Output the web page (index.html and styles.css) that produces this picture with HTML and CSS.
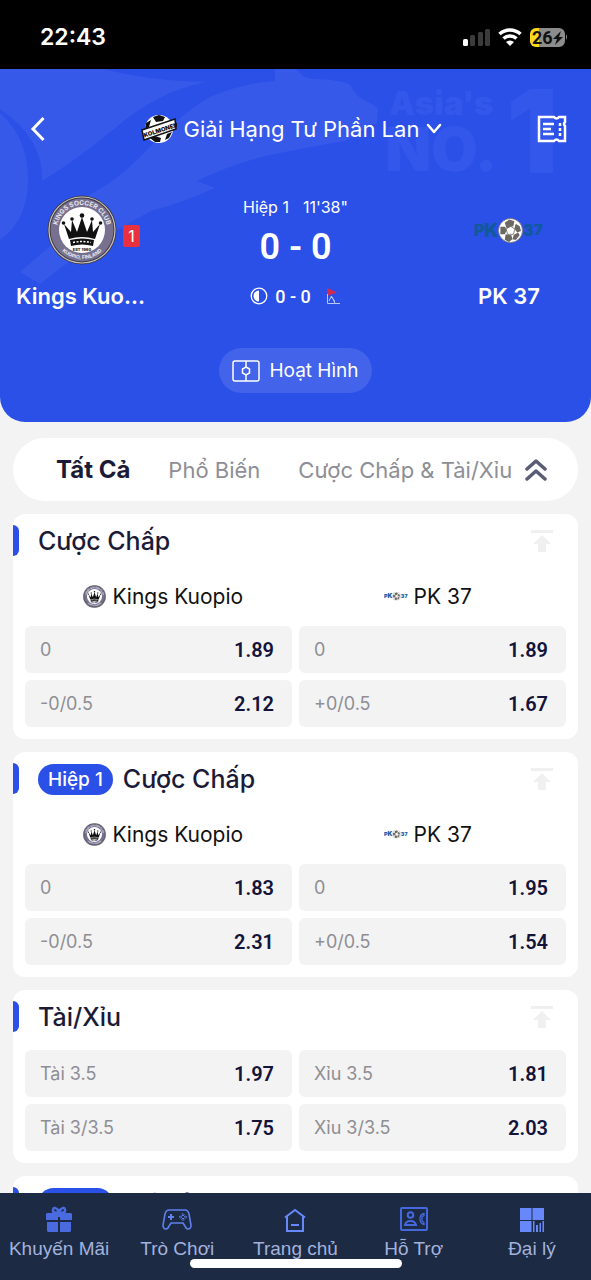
FILE: index.html
```html
<!DOCTYPE html>
<html lang="vi">
<head>
<meta charset="utf-8">
<meta name="viewport" content="width=device-width, initial-scale=1">
<title>Kings Kuopio - PK 37</title>
<link rel="stylesheet" href="styles.css">
</head>
<body>
<svg class="defs" aria-hidden="true">
  <defs>
    <path id="arc-top" d="M10 35a25 25 0 0 1 50 0"/>
    <path id="arc-bottom" d="M6 35a29 29 0 0 0 58 0"/>
    <symbol id="crest" viewBox="0 0 70 70">
      <circle cx="35" cy="35" r="34.500" fill="#3d3a4a"/>
      <circle cx="35" cy="35" r="33" fill="none" stroke="#c9c4b8" stroke-width="1.200"/>
      <circle cx="35" cy="35" r="31.500" fill="#77718f"/>
      <circle cx="35" cy="35" r="23" fill="#fff"/>
      <g fill="#e9e7f0" font-family="Inter, sans-serif" font-weight="700" text-anchor="middle">
        <text font-size="6.500"><textPath href="#arc-top" startOffset="50%">KINGS SOCCER CLUB</textPath></text>
        <text font-size="5"><textPath href="#arc-bottom" startOffset="50%">KUOPIO, FINLAND</textPath></text>
      </g>
      <path fill="#111" d="M22 44 17 29l7 8 1-12 5 12 5-15 5 15 5-12 1 12 7-8-5 15q-13-4-26 0zM23 45q12-3 24 0l-1 6q-11-3-22 0z"/>
      <g fill="#111"><circle cx="16.500" cy="28" r="1.800"/><circle cx="25" cy="24" r="1.800"/><circle cx="35" cy="20.500" r="2.300"/><circle cx="45" cy="24" r="1.800"/><circle cx="53.500" cy="28" r="1.800"/></g>
      <path d="M26 47.500q9-2 18 0" fill="none" stroke="#fff" stroke-width="1.500" stroke-dasharray="2 1.500"/>
      <text x="35" y="55.500" font-family="Inter, sans-serif" font-size="4" font-weight="800" text-anchor="middle" fill="#222">EST 1960</text>
    </symbol>
    <symbol id="ball" viewBox="0 0 26 26">
      <circle cx="13" cy="13" r="12.500" fill="#fff" stroke="#77715f" stroke-width=".8"/>
      <g fill="#6c6862"><path d="m13 8.500 4.500 3-1.500 5.500h-6l-1.500-5.500z" fill="#fff" stroke="#6c6862" stroke-width=".8"/><path d="m7 5 5-3.500 5 2-1 5-3 .500-4 2z"/><path d="m18.500 6 4 2.500 1.500 5-4 1.500-3-4z"/><path d="m16.500 17.500 4.500-2.500 1.500 3-4 5-3.500-1z"/><path d="m8 17 6 1 1 4-3.500 3-4.500-2.500z"/><path d="m2.500 9 5 0 1.500 4-2 4-4.500 0z"/></g>
    </symbol>
    <symbol id="pk" viewBox="0 0 70 26">
      <g font-family="Inter, sans-serif" font-weight="900" fill="currentColor"><text x="0" y="19" font-size="16">P</text><text x="10" y="20" font-size="19">K</text><text x="49" y="19" font-size="16">3</text><text x="60" y="18" font-size="15">7</text></g>
      <use href="#ball" x="24" y="1" width="25" height="25"/>
    </symbol>
    <symbol id="to-top" viewBox="0 0 24 22"><path fill="#f0f0f1" d="M1 0h22v3H1zM12 5l9 9h-5v8H8v-8H3z"/></symbol>
  </defs>
</svg>
<div class="app">
  <div class="status">
    <time>22:43</time>
    <svg width="106" height="22" viewBox="0 0 106 22" aria-label="Pin 26%">
      <rect x="0" y="13" width="5" height="7" rx="1.500" fill="#fff"/>
      <g fill="#3b3b3b"><rect x="7" y="9" width="5" height="11" rx="1.500"/><rect x="15" y="6" width="5" height="14" rx="1.500"/><rect x="22" y="3" width="5" height="17" rx="1.500"/></g>
      <g fill="none" stroke="#fff" stroke-width="3.500"><path d="M36.500 8a15.500 15.500 0 0 1 21 0"/><path d="M40.500 12.500a9.500 9.500 0 0 1 13 0"/></g>
      <path fill="#fff" d="m47 20-4-4a6 6 0 0 1 8 0z"/>
      <path fill="#fbd81a" d="M73 2h4v19h-4a6 6 0 0 1-6-6V8a6 6 0 0 1 6-6z"/>
      <path fill="#8c8c8c" d="M76 2h20a6 6 0 0 1 6 6v7a6 6 0 0 1-6 6H76zM103 8q2 3 0 6z"/>
      <text x="69" y="18" font-family="Roboto, sans-serif" font-weight="700" font-size="18" fill="#111">26</text>
      <path fill="#111" d="m98 5-8 8h4l-2 6 8-8h-4z"/>
    </svg>
  </div>

  <header class="hero">
    <svg class="watermark" viewBox="0 0 591 353" preserveAspectRatio="xMidYMin slice" aria-hidden="true">
      <g fill="#3659ea">
        <path d="M0 0h104q45 12 102 13-48 9-92 47Q78 90 42 112q2-42-42-72z"/>
        <path d="M0 44q28 25 28 66T0 171z"/>
        <path d="M275 0h22q4 9 17 10 32 1 37 7 4 10 15 15 9 5 12 7l-1 15q-14 6-32 18-42 7-75 14-38 9-73 26l18 7q-34 15-64 23-58 30-111 73l-20-12 35-30q-6-18 1-33 50-16 87-55 37-40 67-57 33-14 65-16z"/>
      </g>
      <g fill="#3357ea" font-family="Inter, sans-serif" font-weight="900"><text x="389" y="46" font-size="33">Asia's</text><text x="385" y="102" font-size="60">NO.</text><text x="506" y="104" font-size="116">1</text></g>
    </svg>
    <div class="topbar">
      <button class="plain back" aria-label="Quay lại"><svg width="16" height="26" viewBox="0 0 16 26"><path d="M13.500 2 3 13l10.500 11" fill="none" stroke="#fff" stroke-width="3"/></svg></button>
      <button class="plain league">
        <svg width="36" height="32" viewBox="0 0 36 32"><circle cx="18" cy="16" r="14" fill="#fff"/><path fill="#111" d="m12 4 6-2 6 2-2 4-7 1zM5 10l5-3-2 7-4 2zM29 8l3 6-3 1-2-4zM9 25l5-2 6 2-1 4h-5zM26 21l5-2-3 6-4 2z"/><path d="M1 17 34 6l1 10L3 27z" fill="#fff" stroke="#111" stroke-width="1.500"/><text x="3.500" y="24.500" font-family="Inter, sans-serif" font-size="6" font-weight="900" fill="#111" transform="rotate(-18 3.500 24.500)">KOLMONEN</text></svg>
        <span>Giải Hạng Tư Phần Lan</span>
        <svg width="16" height="12" viewBox="0 0 16 12"><path d="m2 2 6 7 6-7" fill="none" stroke="#fff" stroke-width="2.500" stroke-linecap="round" stroke-linejoin="round"/></svg>
      </button>
      <button class="plain ticket" aria-label="Phiếu cược"><svg width="30" height="28" viewBox="0 0 30 28"><path d="M2 2h15q2.500 3 5 0h6v5q-2 2 0 4v15h-6q-2.500-3-5 0H2z" fill="none" stroke="#fff" stroke-width="2.500"/><path d="M6 9h11M6 14h8M6 19h11M23 8v3M23 13v3M23 18v3" stroke="#fff" stroke-width="2.500"/></svg></button>
    </div>
    <div class="match">
      <div class="side">
        <div class="logo"><svg width="70" height="70"><use href="#crest"/></svg><span class="redcard">1</span></div>
        <div class="name">Kings Kuopio</div>
      </div>
      <div class="middle">
        <div class="clock"><span>Hiệp 1</span><span>11'38"</span></div>
        <div class="score">0 - 0</div>
        <div class="stats">
          <svg width="18" height="18" viewBox="0 0 18 18"><circle cx="9" cy="9" r="7.800" fill="none" stroke="#fff" stroke-width="1.300"/><path d="M9 3.500v11a5.500 5.500 0 0 1 0-11z" fill="#fff"/></svg>
          <span>0 - 0</span>
          <svg class="corner" width="15" height="18" viewBox="0 0 15 18"><path d="M1 1 11 5.500 1 9z" fill="#d52a4b"/><path d="M1.500 7v9.500H14M3 14l2.500-5 3 6M5 10q4 2 4 7" fill="none" stroke="#b9c7ff"/></svg>
        </div>
      </div>
      <div class="side">
        <div class="logo pk-dark"><svg width="70" height="26"><use href="#pk"/></svg></div>
        <div class="name">PK 37</div>
      </div>
    </div>
    <button class="anim"><svg width="28" height="22" viewBox="0 0 28 22"><g fill="none" stroke="#fff" stroke-width="1.500"><rect x="1" y="1" width="26" height="20" rx="2"/><path d="M14 1v6M14 15v6"/><path d="m14 7 3.500 2v4L14 15l-3.500-2V9z"/></g></svg><span>Hoạt Hình</span></button>
  </header>

  <main class="content">
    <div class="tabs">
      <button class="plain tab active">Tất Cả</button>
      <button class="plain tab">Phổ Biến</button>
      <button class="plain tab">Cược Chấp &amp; Tài/Xỉu</button>
      <button class="plain collapse" aria-label="Thu gọn"><svg width="22" height="24" viewBox="0 0 22 24"><path d="m2 11 9-8 9 8M2 21l9-8 9 8" fill="none" stroke="#5b5c75" stroke-width="3.500" stroke-linecap="round" stroke-linejoin="round"/></svg></button>
    </div>

    <section class="card">
      <div class="head"><h2>Cược Chấp</h2><button class="plain pin" aria-label="Ghim"><svg width="24" height="22"><use href="#to-top"/></svg></button></div>
      <div class="teams"><div><svg width="23" height="23"><use href="#crest"/></svg>Kings Kuopio</div><div><svg class="pk-blue" width="24" height="10"><use href="#pk"/></svg>PK 37</div></div>
      <div class="odds">
        <button><span>0</span><b>1.89</b></button><button><span>0</span><b>1.89</b></button>
        <button><span>-0/0.5</span><b>2.12</b></button><button><span>+0/0.5</span><b>1.67</b></button>
      </div>
    </section>

    <section class="card">
      <div class="head"><span class="badge">Hiệp 1</span><h2>Cược Chấp</h2><button class="plain pin" aria-label="Ghim"><svg width="24" height="22"><use href="#to-top"/></svg></button></div>
      <div class="teams"><div><svg width="23" height="23"><use href="#crest"/></svg>Kings Kuopio</div><div><svg class="pk-blue" width="24" height="10"><use href="#pk"/></svg>PK 37</div></div>
      <div class="odds">
        <button><span>0</span><b>1.83</b></button><button><span>0</span><b>1.95</b></button>
        <button><span>-0/0.5</span><b>2.31</b></button><button><span>+0/0.5</span><b>1.54</b></button>
      </div>
    </section>

    <section class="card">
      <div class="head"><h2>Tài/Xỉu</h2><button class="plain pin" aria-label="Ghim"><svg width="24" height="22"><use href="#to-top"/></svg></button></div>
      <div class="odds">
        <button><span>Tài 3.5</span><b>1.97</b></button><button><span>Xỉu 3.5</span><b>1.81</b></button>
        <button><span>Tài 3/3.5</span><b>1.75</b></button><button><span>Xỉu 3/3.5</span><b>2.03</b></button>
      </div>
    </section>

    <section class="card">
      <div class="head"><span class="badge">Hiệp 1</span><h2>Tài/Xỉu</h2></div>
    </section>
  </main>

  <nav class="nav">
    <a href="#"><svg width="26" height="28" viewBox="0 0 26 28"><path fill="#4a6be0" d="M1 8h11v7H0V9zM14 8h11l1 1v6H14zM1 17h11v10H2l-1-1zM14 17h11v9l-1 1H14z"/><path fill="#4a6be0" d="M0 9h26v5H0z"/><path fill="none" stroke="#4a6be0" stroke-width="2.500" d="M12 8q-6 0-5-3.500T12 5zM14 8q6 0 5-3.500T14 5z"/><path fill="#1c2a44" d="M12 12h2v12h-2z"/></svg>Khuyến Mãi</a>
    <a href="#"><svg width="30" height="28" viewBox="0 0 30 28"><path fill="none" stroke="#5f80ee" stroke-width="1.600" d="M7 5h16q3 0 4 4l2 11q0 4-3 4-2 0-3-3l-2-3H9l-2 3q-1 3-3 3-3 0-3-4L3 9q1-4 4-4z"/><path stroke="#5f80ee" stroke-width="2" d="M6 12h6M9 9v6"/><path fill="none" stroke="#5f80ee" d="m21 8.500 1.200 1.200L21 11l-1.200-1.300zM21 13l1.200 1.200L21 15.500l-1.200-1.300zM18.500 10.800l1.200 1.200-1.200 1.200-1.200-1.200zM23.500 10.800l1.200 1.200-1.200 1.200-1.200-1.200z"/></svg>Trò Chơi</a>
    <a href="#"><svg width="24" height="28" viewBox="0 0 24 28"><path fill="none" stroke="#6688fb" stroke-width="2" d="M2 12.500 12 5l10 7.500M4 11v15h16V11M8 20h8"/></svg>Trang chủ</a>
    <a href="#"><svg width="30" height="28" viewBox="0 0 30 28"><g fill="none" stroke="#4668de" stroke-width="2"><rect x="2" y="3" width="26" height="22" rx="1"/><circle cx="11.500" cy="10" r="2.800"/><path d="M6 20q1-4 5.500-4t5.500 4z"/><path d="M25 8.500q-4 1-4 5.500t4 5.500v-2l-2-1.500v-4l2-1.500z" stroke-width="1.300"/></g></svg>Hỗ Trợ</a>
    <a href="#"><svg width="26" height="28" viewBox="0 0 26 28"><path fill="#6688fb" d="M1 3h11.500v12H1zM13.500 3H25v12H13.500zM1 16h11.500v11H1zM14 16h1.500v11H14zM17 20h2v7h-2zM20.500 18H22v9h-1.500zM23.500 16H25v11h-1.500z"/></svg>Đại lý</a>
    <div class="home-bar"></div>
  </nav>
</div>
</body>
</html>
```
FILE: styles.css
```css
* { box-sizing: border-box; }
body { margin: 0; background: #f3f3f3; font-family: Inter, "Noto Sans", sans-serif; color: #1b1b38; }
button { border: 0; padding: 0; margin: 0; font: inherit; color: inherit; cursor: pointer; }
svg { display: block; flex: none; }
h2 { margin: 0; }
.defs { position: absolute; width: 0; height: 0; }
.plain { background: none; }
.app { height: 100vh; display: flex; flex-direction: column; }

.status { flex: none; height: 69px; padding: 4px 22px 0 40px; background: #000; color: #fff; display: flex; align-items: center; justify-content: space-between; font-size: 23px; font-weight: 600; }

.hero { flex: none; position: relative; overflow: hidden; padding: 40px 16px 29px; border-radius: 0 0 25px 25px; background: #2b50e8; color: #fff; display: flex; flex-direction: column; align-items: center; }
.watermark { position: absolute; inset: 0; width: 100%; height: 100%; }
.topbar, .match, .anim { position: relative; }
.topbar { align-self: stretch; height: 40px; padding: 0 8px 0 14px; display: flex; align-items: center; justify-content: space-between; }
.league { display: flex; align-items: center; gap: 7px; font-size: 22px; white-space: nowrap; }
.match { align-self: stretch; margin-top: 46px; display: grid; grid-template-columns: 132px 1fr 132px; }
.side { display: flex; flex-direction: column; gap: 16px; }
.logo { position: relative; height: 70px; display: flex; align-items: center; justify-content: center; }
.redcard { position: absolute; left: 107px; top: 30px; width: 17px; height: 22px; border-radius: 2px; background: #e8303f; font-size: 16px; line-height: 22px; text-align: center; }
.pk-dark { color: #12599c; }
.pk-blue { color: #1160a8; }
.name { font-size: 22px; font-weight: 600; line-height: 30px; text-align: center; overflow: hidden; text-overflow: ellipsis; white-space: nowrap; }
.middle { display: flex; flex-direction: column; align-items: center; }
.clock { display: flex; gap: 14px; font-size: 16px; line-height: 24px; }
.score, .stats, .odds b { font-family: Roboto, sans-serif; font-weight: 600; }
.score { margin-top: 8px; font-size: 36px; line-height: 40px; }
.stats { margin-top: 14px; height: 30px; display: flex; align-items: center; gap: 7px; font-size: 18px; font-weight: 500; }
.corner { margin-left: 8px; }
.anim { margin-top: 37px; height: 45px; padding: 0 13px; border-radius: 23px; background: #4263ea; display: flex; align-items: center; gap: 9px; font-size: 19px; }

.content { flex: 1; min-height: 0; overflow: auto; scrollbar-width: none; padding: 16px 13px 0; display: flex; flex-direction: column; gap: 13px; }
.tabs { flex: none; height: 63px; padding: 0 31px 0 43px; border-radius: 32px; background: #fff; display: flex; align-items: center; font-size: 22px; white-space: nowrap; }
.tab { margin-right: 38px; color: #8d8e96; }
.tab:nth-child(3) { margin-right: 0; }
.tab.active { color: #1b1b38; font-size: 24px; font-weight: 700; }
.collapse { margin-left: auto; }
.card { flex: none; padding: 0 12px 12px; border-radius: 12px; background: #fff; }
.head { position: relative; height: 54px; padding: 0 12px 0 13px; margin-bottom: 6px; display: flex; align-items: center; gap: 10px; }
.head::before { content: ""; position: absolute; left: -12px; top: 11px; width: 6px; height: 31px; border-radius: 0 6px 6px 0; background: #2b50e8; }
.head h2 { font-size: 25px; font-weight: 500; }
.pin { margin-left: auto; }
.badge { height: 31px; padding: 0 10px; border-radius: 16px; background: #2b50e8; color: #fff; font-size: 19px; font-weight: 500; line-height: 31px; }
.teams { height: 44px; padding: 0 6px; margin-bottom: 8px; display: grid; grid-template-columns: 1fr 1fr; color: #111; font-size: 21px; }
.teams div { display: flex; align-items: center; justify-content: center; gap: 6px; }
.odds { display: grid; grid-template-columns: 1fr 1fr; gap: 7px; }
.odds button { height: 47px; padding: 0 18px 0 15px; border-radius: 6px; background: #f3f3f4; display: flex; align-items: center; justify-content: space-between; }
.odds span { color: #8e8e93; font-size: 18px; }
.odds b { color: #14143a; font-size: 20px; }

.nav { flex: none; position: relative; height: 87px; padding-top: 12px; background: #1c2a44; display: grid; grid-template-columns: repeat(5, 1fr); }
.nav a { display: flex; flex-direction: column; align-items: center; gap: 4px; color: #a3b2dc; font-family: "Liberation Sans", sans-serif; font-size: 19px; line-height: 24px; text-decoration: none; white-space: nowrap; }
.home-bar { position: absolute; left: 50%; bottom: 12px; width: 212px; height: 9px; margin-left: -106px; border-radius: 5px; background: #fff; }
```
